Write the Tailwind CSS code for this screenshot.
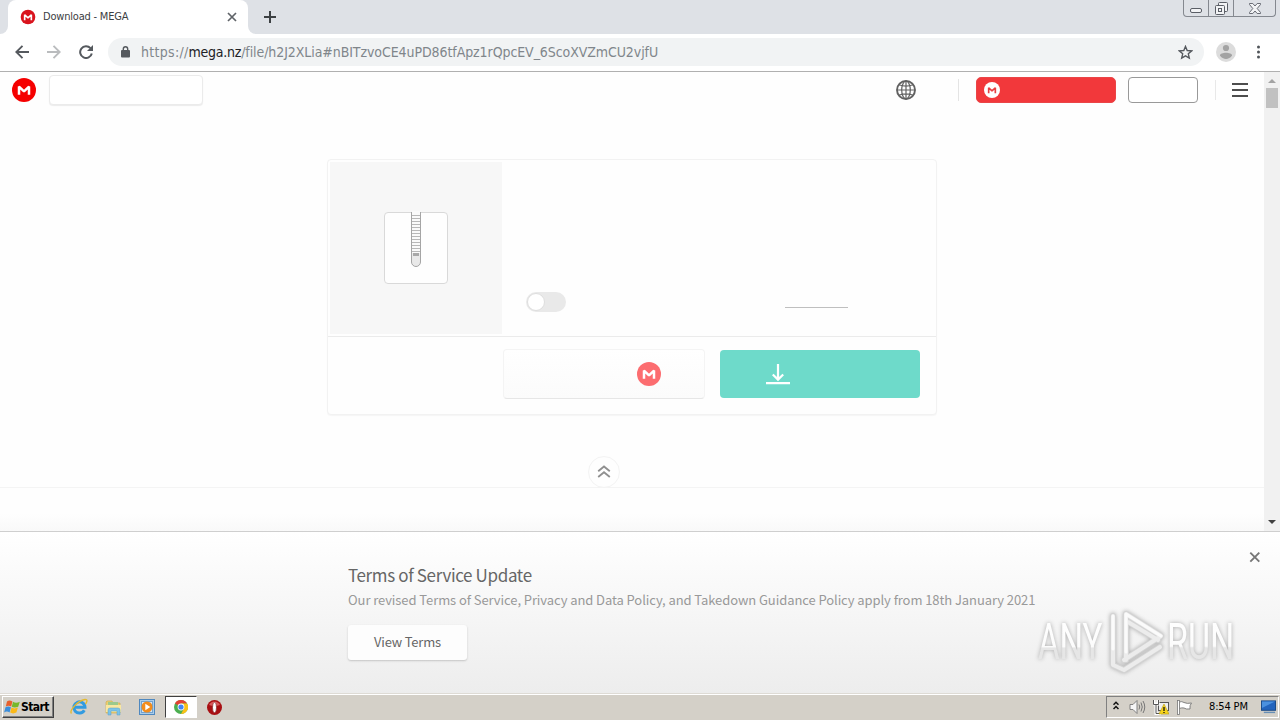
<!DOCTYPE html>
<html lang="en">
<head>
    <meta charset="UTF-8">
    <meta name="viewport" content="width=device-width, initial-scale=1.0">
    <title>Download - MEGA</title>
    <script src="https://cdn.jsdelivr.net/npm/@tailwindcss/browser@4"></script>
</head>
<body class="w-[1280px] h-[720px] overflow-hidden flex flex-col bg-white font-['DejaVu_Sans_Condensed','DejaVu_Sans',sans-serif]">

    <svg class="hidden">
        <symbol id="mega-m" viewBox="0 0 24 24">
            <path d="M7 16.8V8.6L12 13.3L17 8.6V16.8" fill="none" stroke="currentColor" stroke-width="2.5" stroke-linejoin="bevel"/>
        </symbol>
    </svg>

    <!-- Tab strip -->
    <div class="h-[34px] shrink-0 bg-[#dee1e6] flex items-start">
        <div class="w-2 h-[34px] bg-white"><div class="w-2 h-[34px] bg-[#dee1e6] rounded-br-lg"></div></div>
        <div class="w-60 h-[34px] bg-white rounded-t-lg flex items-center pl-3 pr-[11px]">
            <svg class="size-4 text-white" viewBox="0 0 24 24"><circle cx="12" cy="12" r="11" fill="#d9141e"/><use href="#mega-m"/></svg>
            <span class="ml-[7px] pt-px text-[11px] tracking-[-0.2px] text-[#3c4043] whitespace-nowrap">Download - MEGA</span>
            <svg class="size-[10px] ml-auto" viewBox="0 0 10 10"><path d="M1 1L9 9M9 1L1 9" stroke="#5f6368" stroke-width="1.7"/></svg>
        </div>
        <div class="w-2 h-[34px] bg-white"><div class="w-2 h-[34px] bg-[#dee1e6] rounded-bl-lg"></div></div>
        <svg class="size-3 mt-[11px] ml-2" viewBox="0 0 12 12"><path d="M6 0V12M0 6H12" stroke="#3c4043" stroke-width="2"/></svg>
        <!-- Window controls -->
        <div class="ml-auto mr-1 w-[93px] h-[17px] border border-t-0 border-[#84888f] rounded-b-[4px] flex">
            <div class="w-[25px] border-r border-[#84888f] flex justify-center">
                <svg class="w-3 h-[5px] mt-2" viewBox="0 0 12 5"><rect x=".5" y=".5" width="11" height="4" rx="1.5" fill="#f2f3f5" stroke="#5a5e66"/></svg>
            </div>
            <div class="w-[25px] border-r border-[#84888f] flex justify-center">
                <svg class="size-[13px] mt-[2px]" viewBox="0 0 13 13"><g fill="#f2f3f5" stroke="#5a5e66"><rect x="3.5" y=".5" width="9" height="9" rx="1"/><rect x=".5" y="3.5" width="9" height="9" rx="1"/><rect x="3.5" y="6.5" width="3" height="3"/></g></svg>
            </div>
            <div class="grow flex justify-center">
                <svg class="w-3 h-[11px] mt-[3px]" viewBox="0 0 12 11"><path d="M.5.5H3.8L6 3L8.2.5H11.5V1.5L8.2 5.5L11.5 9.5V10.5H8.2L6 8L3.8 10.5H.5V9.5L3.8 5.5L.5 1.5Z" fill="#f2f3f5" stroke="#5a5e66" stroke-width=".9"/></svg>
            </div>
        </div>
    </div>

    <!-- Toolbar -->
    <div class="h-[38px] shrink-0 border-b border-[#b0b0b0] flex items-center pl-[15px] pb-px">
        <svg class="size-[14px]" viewBox="0 0 14 14"><path d="M14 7H1.5M7.5.8L1.3 7L7.5 13.2" fill="none" stroke="#55595e" stroke-width="1.9"/></svg>
        <svg class="size-[14px] ml-[18px]" viewBox="0 0 14 14"><path d="M0 7H12.5M6.5.8L12.7 7L6.5 13.2" fill="none" stroke="#babcbe" stroke-width="1.9"/></svg>
        <svg class="size-[14px] ml-[18px]" viewBox="0 0 14 14"><path d="M11.5 3.2A5.9 5.9 0 1 0 12.8 8.5" fill="none" stroke="#55595e" stroke-width="2"/><path d="M14 0V6H8Z" fill="#55595e"/></svg>
        <div class="ml-[15px] w-[1096px] h-7 rounded-full bg-[#f1f3f4] flex items-center pl-[13px] pr-[11px]">
            <svg class="w-[9px] h-3" viewBox="0 0 9 12"><path d="M2.3 5V3A2.2 2.2 0 0 1 6.7 3V5" fill="none" stroke="#55595e" stroke-width="1.4"/><rect y="4" width="9" height="7.5" rx="1" fill="#55595e"/></svg>
            <span class="ml-[11px] pb-px text-sm tracking-[-0.08px] whitespace-nowrap text-[#80868b]"><span class="tracking-[0.3px]">https://</span><span class="text-[#202124] tracking-[-0.25px]">mega.nz</span>/file/h2J2XLia#nBITzvoCE4uPD86tfApz1rQpcEV_6ScoXVZmCU2vjfU</span>
            <svg class="size-[15px] ml-auto" viewBox="0 0 15 15"><path d="M7.5 1.4L9.2 5.5L13.7 5.9L10.3 8.8L11.3 13.1L7.5 10.8L3.7 13.1L4.7 8.8L1.3 5.9L5.8 5.5Z" fill="none" stroke="#55595e" stroke-width="1.4"/></svg>
        </div>
        <svg class="size-5 ml-3" viewBox="0 0 20 20"><circle cx="10" cy="10" r="10" fill="#dcdcdc"/><circle cx="10" cy="6" r="3.1" fill="#a3a3a3"/><path d="M4 13.6C4 9.9 16 9.9 16 13.6C15 16 12 17 10 17S5 16 4 13.6Z" fill="#a3a3a3"/></svg>
        <svg class="w-1 h-[14px] ml-5" viewBox="0 0 4 14"><g fill="#505459"><circle cx="2.5" cy="2" r="1.5"/><circle cx="2.5" cy="7" r="1.5"/><circle cx="2.5" cy="12" r="1.5"/></g></svg>
    </div>

    <!-- Page with scrollbar -->
    <div class="h-[459px] shrink-0 flex">
        <main class="w-[1264px] flex flex-col bg-[#fefefe]">
            <header class="h-9 flex items-center pl-3">
                <svg class="size-6 text-white" viewBox="0 0 24 24"><circle cx="12" cy="12" r="12" fill="#f50000"/><use href="#mega-m"/></svg>
                <div class="ml-[13px] w-[154px] h-[30px] bg-white border border-[#ebebeb] rounded-[4px] shadow-[0_1px_1px_#ececec]"></div>
                <svg class="size-5 ml-[693px]" viewBox="0 0 20 20"><g fill="none" stroke="#616161" stroke-width="1.2"><circle cx="10" cy="10" r="9" stroke-width="1.9"/><ellipse cx="10" cy="10" rx="4.3" ry="9"/><path d="M10 1V19M1 10H19M3 4.8Q10 7.3 17 4.8M3 15.2Q10 12.7 17 15.2"/></g></svg>
                <div class="ml-[42px] w-px h-[22px] bg-[#e4e4e4]"></div>
                <div class="ml-[17px] w-[140px] h-[26px] rounded-[5px] bg-[#f2383b] border border-[#ea4547] flex items-center pl-[7px]">
                    <svg class="size-4 text-[#e83e42]" viewBox="0 0 24 24"><circle cx="12" cy="12" r="12" fill="#fff"/><use href="#mega-m"/></svg>
                </div>
                <div class="ml-3 w-[70px] h-[26px] rounded-[4px] bg-white border border-[#999]"></div>
                <div class="ml-[17px] w-px h-[20px] bg-[#e8e8e8]"></div>
                <svg class="w-4 h-[14px] ml-4" viewBox="0 0 16 14"><path d="M0 1H16M0 7H16M0 13H16" stroke="#4d4d4d" stroke-width="2"/></svg>
            </header>

            <!-- File card -->
            <section class="mt-[51px] ml-[327px] w-[610px] h-[256px] bg-[#fefefe] border border-[#f2f2f2] rounded-[4px] shadow-[0_1px_1px_#f6f6f6]">
                <div class="h-[177px] border-b border-[#ebebeb] flex pt-[2px] pl-[2px]">
                    <div class="size-[172px] bg-[#f7f7f7] flex justify-center">
                        <svg class="w-16 h-[73px] mt-[49px]" viewBox="0 0 64 73">
                            <rect x=".5" y="1.5" width="63" height="71" rx="3.5" fill="#fefefe" stroke="#d9d9d9"/>
                            <path d="M27.5 1V51A4.5 4.5 0 0 0 36.5 51V1" fill="#e9e9e9" stroke="#a5a5a5"/>
                            <rect x="28" y="0" width="8" height="42" fill="#fafafa"/>
                            <path d="M28 4.5H36M28 7.5H36M28 10.5H36M28 13.5H36M28 16.5H36M28 19.5H36M28 22.5H36M28 25.5H36M28 28.5H36M28 31.5H36M28 34.5H36M28 37.5H36M28 40.5H36" stroke="#b8b8b8"/>
                            <rect x="29" y="42" width="6" height="3" fill="#a8a8a8"/>
                        </svg>
                    </div>
                    <div class="mt-[130px] ml-6 w-10 h-5 rounded-full bg-[#e9e9e9] p-[1px]">
                        <div class="size-[18px] rounded-full bg-white border border-[#dedede]"></div>
                    </div>
                    <div class="mt-[145px] ml-[219px] w-[63px] h-px bg-[#bfbfbf]"></div>
                </div>
                <div class="flex pt-3 pl-[175px]">
                    <div class="w-[202px] h-[50px] rounded-[4px] border border-[#f4f4f4] border-b-[#e6e6e6] bg-linear-to-b from-white to-[#fbfbfb] flex items-center pl-[133px]">
                        <svg class="size-6 text-white" viewBox="0 0 24 24"><circle cx="12" cy="12" r="12" fill="#fc6d70"/><use href="#mega-m"/></svg>
                    </div>
                    <div class="mt-px ml-[15px] w-[200px] h-12 rounded-[4px] bg-[#6edaca] flex items-center pl-[46px]">
                        <svg class="w-6 h-[22px]" viewBox="0 0 24 22"><path d="M12 1V16.5M6.8 11.5L12 16.6L17.2 11.5M0 20.2H24" fill="none" stroke="#fff" stroke-width="2.2"/></svg>
                    </div>
                </div>
            </section>

            <!-- Scroll-up handle on the divider line -->
            <div class="relative mt-[72px] h-11 border-t border-[#f4f4f4] bg-linear-to-b from-[#fefefe] from-60% to-[#f9f9f9]">
                <div class="absolute left-[588px] -top-8 size-8 rounded-full bg-[#fefefe] border border-[#f3f3f3] flex items-center justify-center pb-px">
                    <svg class="w-[14px] h-[13px]" viewBox="0 0 14 13"><path d="M1.2 6.3L7 1.5L12.8 6.3M1.2 12L7 7.2L12.8 12" fill="none" stroke="#8f8f8f" stroke-width="1.8"/></svg>
                </div>
            </div>
        </main>
        <div class="w-4 bg-[#f1f1f1] flex flex-col items-center">
            <svg class="w-2 h-1 mt-[7px]" viewBox="0 0 8 4"><path d="M0 4L4 0L8 4Z" fill="#a3a3a3"/></svg>
            <div class="mt-[5px] w-3 h-5 bg-[#c1c1c1]"></div>
            <svg class="w-2 h-1 mt-auto mb-[7px]" viewBox="0 0 8 4"><path d="M0 0L4 4L8 0Z" fill="#404040"/></svg>
        </div>
    </div>

    <!-- Terms banner -->
    <div class="relative h-[162px] shrink-0 border-t border-[#cfcfcf] bg-linear-to-b from-white to-[#ededed] pl-[348px] font-['Noto_Sans_CJK_SC',sans-serif]">
        <h2 class="pt-[31px] text-[17px] leading-6 tracking-[-0.36px] text-[#666] font-normal whitespace-nowrap">Terms of Service Update</h2>
        <p class="mt-[3px] text-[13px] leading-5 tracking-[-0.08px] text-[#999] whitespace-nowrap">Our revised Terms of Service, Privacy and Data Policy, and Takedown Guidance Policy apply from 18th January 2021</p>
        <div class="mt-[15px] w-[119px] h-[35px] bg-[#fdfdfd] rounded-[3px] shadow-[0_1px_2px_#c4c4c4] flex items-center justify-center pb-px text-[13px] tracking-[-0.2px] text-[#666]">View Terms</div>
        <svg class="absolute left-[1249px] top-[20px] size-[11px]" viewBox="0 0 11 11"><path d="M1.3.7L10.3 9.7M10.3.7L1.3 9.7" stroke="#777" stroke-width="1.9"/></svg>

        <!-- Watermark -->
        <svg class="absolute left-[1030px] top-[72px] w-[220px] h-[76px] overflow-visible drop-shadow-[0_0_2px_#aaaaaa]" viewBox="0 0 220 76">
            <defs>
                <linearGradient id="wm" x1="0" y1="0" x2="0" y2="1">
                    <stop offset="0" stop-color="#fff"/><stop offset=".58" stop-color="#fcfcfc"/><stop offset=".61" stop-color="#e6e6e6"/><stop offset="1" stop-color="#e6e6e6"/>
                </linearGradient>
            </defs>
            <g fill="url(#wm)" font-family="Roboto, sans-serif" font-size="50">
                <text transform="translate(8 55) scale(.66 1)">ANY</text>
                <text transform="translate(137 55) scale(.68 1)">RUN</text>
            </g>
            <g fill="none" stroke-linejoin="round" stroke-linecap="round">
                <path d="M83 12V61L94 66L130 43M96 56V10L131 32L94 56M98 18L128 36" stroke="#d4d4d4" stroke-width="6"/>
                <path d="M83 12V61L94 66L130 43M96 56V10L131 32L94 56M98 18L128 36" stroke="#ececec" stroke-width="4"/>
                <path d="M83 12V45M96 48V10L131 32" stroke="#fbfbfb" stroke-width="3"/>
            </g>
        </svg>
    </div>

    <!-- Taskbar -->
    <div class="h-[27px] shrink-0 bg-[#d4d0c8] border-t border-[#dedbd5] shadow-[inset_0_1px_0_#fff] flex items-center text-black">
        <div class="ml-[2px] w-[52px] h-[22px] border border-t-white border-l-white border-r-[#404040] border-b-[#404040] shadow-[inset_-1px_-1px_0_#808080] flex items-center pl-[1px]">
            <svg class="size-4" viewBox="0 0 16 16"><path d="M3 2.5Q5.5.5 8.4 2.5L7.2 7.5Q4.5 5.8 1.8 7.5Z" fill="#e8602c"/><path d="M9 2.8Q12 4.5 15.8 2.8L14.2 7.8Q10.6 9.4 7.8 7.8Z" fill="#77b82a"/><path d="M1.5 8.3Q4.2 6.6 6.9 8.3L5.6 13.4Q2.8 11.6.1 13.4Z" fill="#3b8edb"/><path d="M7.5 8.6Q10.4 10.2 13.9 8.6L12.4 13.6Q9 15.2 6.2 13.6Z" fill="#fbb918"/></svg>
            <span class="ml-px text-xs font-bold tracking-[-0.6px]">Start</span>
        </div>
        <svg class="size-[18px] ml-4" viewBox="0 0 18 18"><path d="M14.3 12.2A5.6 5.6 0 1 1 15 9.3H5" fill="none" stroke="#329be0" stroke-width="3"/><path d="M1.5 15.5C-1 13 7 3 15 1.5C18 1.3 17 4 15.5 6" fill="none" stroke="#e4b92f" stroke-width="1.4"/></svg>
        <svg class="size-[17px] ml-[17px]" viewBox="0 0 17 17"><path d="M1 3L2 2H7L8 4H15V14H1Z" fill="#edcf72" stroke="#c9a849" stroke-width=".6"/><rect x="3" y="3" width="10" height="4" fill="#9cc98c"/><path d="M1 6H16V13H1Z" fill="#f9e7a0"/><path d="M3 16V11Q3 9 5 9H13Q15 9 15 11V16H12V12H6V16Z" fill="#7cc4e8" stroke="#5a9fc8" stroke-width=".5"/></svg>
        <svg class="size-4 ml-[17px]" viewBox="0 0 16 16"><rect x=".5" y=".5" width="15" height="15" fill="#aacdea" stroke="#4f88bf"/><rect x="2.5" y="2.5" width="11" height="11" fill="#d5e6f5" stroke="#72a2cf"/><circle cx="8" cy="8" r="5.5" fill="#f28c1c"/><path d="M6.3 4.8L11.3 8L6.3 11.2Z" fill="#fff"/></svg>
        <div class="ml-[10px] w-8 h-[22px] bg-white border border-t-[#404040] border-l-[#404040] border-r-white border-b-white flex items-center justify-center">
            <svg class="size-[14px]" viewBox="0 0 14 14"><circle cx="7" cy="7" r="7" fill="#4caf50"/><path d="M7 7L1 3.4A7 7 0 0 1 13.1 3.5H7Z" fill="#e34133"/><path d="M7 3.5H13.1A7 7 0 0 1 7 14L10 8.5Z" fill="#fbc116"/><circle cx="7" cy="7" r="3.4" fill="#fff"/><circle cx="7" cy="7" r="2.6" fill="#4285f4"/></svg>
        </div>
        <svg class="size-[15px] ml-[10px]" viewBox="0 0 15 15"><circle cx="7.5" cy="7.5" r="7.5" fill="#a80f12"/><path d="M2 5A6 6 0 0 1 13 5Q7.5 7 2 5Z" fill="#d9585a"/><ellipse cx="7.5" cy="7.5" rx="2" ry="5.2" fill="#fff" stroke="#6f0a0c" stroke-width=".6"/></svg>

        <!-- Tray -->
        <div class="ml-auto mr-px w-[173px] h-[22px] border border-t-[#808080] border-l-[#808080] border-r-white border-b-white flex items-center pl-[6px]">
            <svg class="w-[6px] h-[9px] mb-[3px]" viewBox="0 0 6 9"><path d="M.5 3.7L3 1.2L5.5 3.7M.5 8L3 5.5L5.5 8" fill="none" stroke="#111" stroke-width="1.5"/></svg>
            <svg class="w-[17px] h-4 ml-[10px]" viewBox="0 0 17 16"><path d="M1 5.5H4L8 1.5V14.5L4 10.5H1Z" fill="#f6f6f6" stroke="#777" stroke-width=".9"/><path d="M10 5.5Q11.5 8 10 10.5M12 3.5Q14.5 8 12 12.5M14 2Q17.5 8 14 14" fill="none" stroke="#777"/></svg>
            <svg class="size-4 ml-[7px]" viewBox="0 0 16 16"><rect x="5.5" y="3.5" width="10" height="8" fill="#eee" stroke="#555"/><path d="M1 1V5H5V1M3 5V15H8" fill="none" stroke="#fff" stroke-width="3"/><path d="M.5 1V5.5H5.5V1M3 5.5V14.5H8" fill="none" stroke="#555"/><path d="M11 5L16 15H6Z" fill="#f8d51b" stroke="#b59a10" stroke-width=".6"/><path d="M11 8V12M11 13V14" stroke="#111" stroke-width="1.3"/></svg>
            <svg class="w-[17px] h-[15px] ml-[7px]" viewBox="0 0 17 15"><path d="M3 2Q6 1 8 2.5Q11 4 15.5 3Q13.5 5 14 9Q10 9.5 8 8Q6 7.5 3 8.5Z" fill="#fff" stroke="#777" stroke-width=".9"/><rect x="1.5" y=".5" width="2" height="14" fill="#fff" stroke="#777" stroke-width=".8"/></svg>
            <span class="ml-[16px] pt-px text-[11px] tracking-[-0.15px] whitespace-nowrap">8:54 PM</span>
            <svg class="w-[15px] h-[14px] ml-auto mr-[2px]" viewBox="0 0 16 14"><rect x=".5" y=".5" width="15" height="10" fill="#2364bd" stroke="#174784"/><path d="M1 1H15L1 8Z" fill="#4b91df"/><path d="M3 12H15V13.5H3Z" fill="#688fb5"/></svg>
        </div>
    </div>

</body>
</html>
